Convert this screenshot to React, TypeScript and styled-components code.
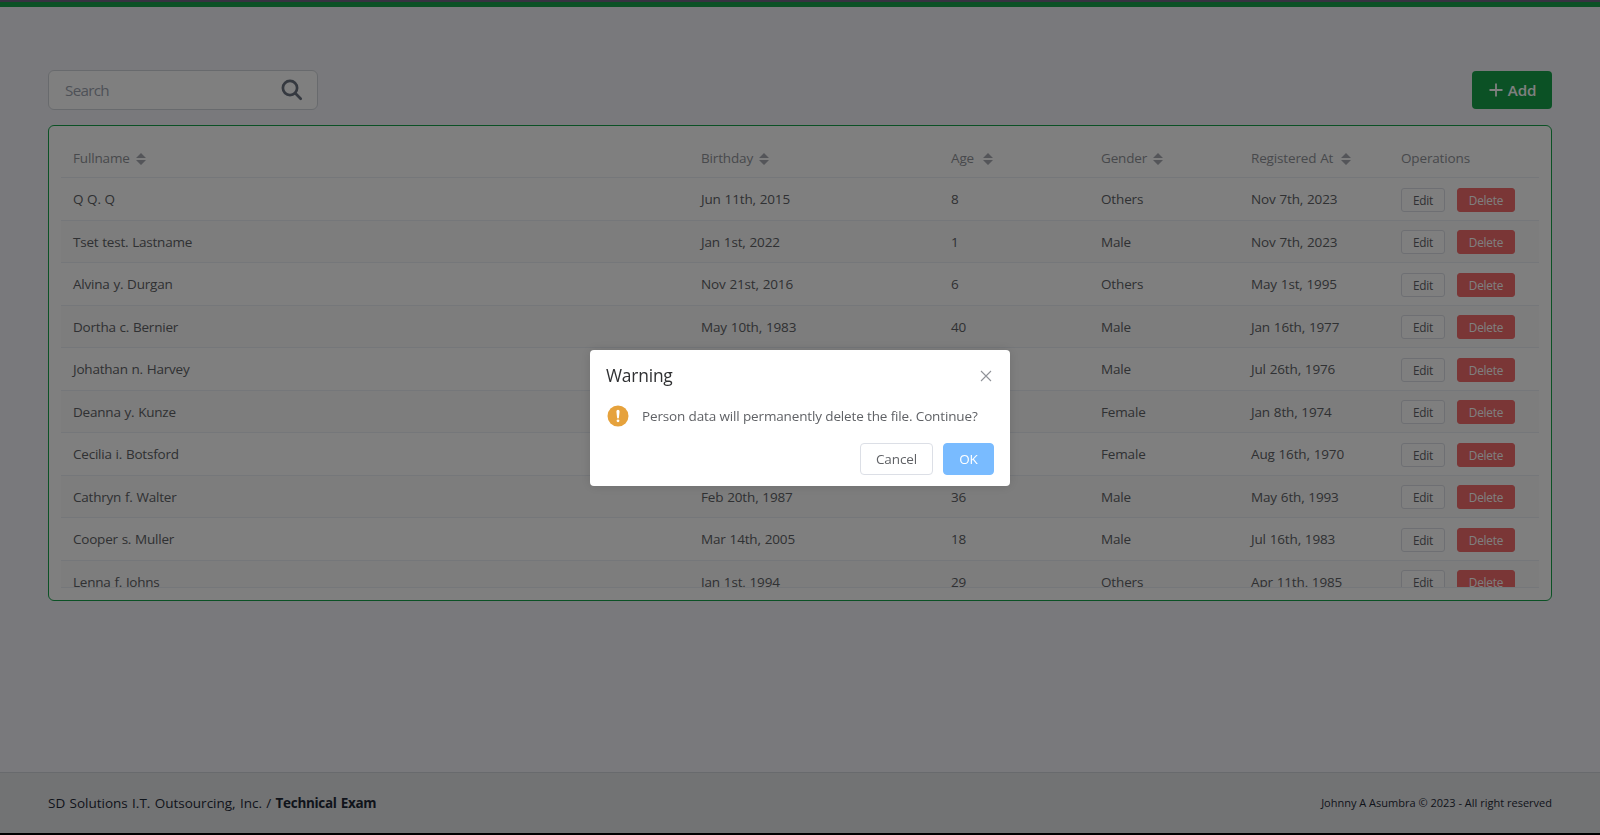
import React from "react";
import styled, { createGlobalStyle, css } from "styled-components";

const GlobalStyle = createGlobalStyle`
  *, *::before, *::after { box-sizing: border-box; }
  body {
    margin: 0;
    background: #000;
    font-family: "Open Sans", "Noto Sans", sans-serif;
    overflow: hidden;
  }
  button { font-family: inherit; cursor: pointer; }
`;

const Page = styled.div`
  display: flex;
  flex-direction: column;
  height: 833px;
  background: #f3f3f8;
  border-top: 2px solid #6e6683;
`;

const Accent = styled.div`
  flex: none;
  height: 5px;
  background: #16a34a;
`;

const Main = styled.main`
  flex: 1;
  padding: 63px 48px 0;
`;

const Toolbar = styled.div`
  display: flex;
  align-items: center;
  justify-content: space-between;
  height: 40px;
  margin-bottom: 15px;
`;

const SearchBox = styled.label`
  display: flex;
  align-items: center;
  width: 270px;
  height: 40px;
  padding: 0 14px 0 16px;
  border: 1px solid #d1d5db;
  border-radius: 6px;
  background: #fff;
`;

const SearchInput = styled.input`
  flex: 1;
  min-width: 0;
  padding: 0;
  border: 0;
  outline: 0;
  background: transparent;
  font: 15.2px "Open Sans", sans-serif;
  letter-spacing: -0.7px;
  color: #4b5563;
  &::placeholder { color: #9ca3af; opacity: 1; }
`;

const AddButton = styled.button`
  display: flex;
  align-items: center;
  justify-content: center;
  gap: 4px;
  width: 80px;
  height: 38px;
  padding: 0;
  border: 0;
  border-radius: 4px;
  background: #16a34a;
  color: #fff;
  font-size: 15.2px;
  font-weight: 600;
  letter-spacing: -0.2px;
`;

const Card = styled.section`
  height: 476px;
  padding: 12px;
  border: 1px solid #16a34a;
  border-radius: 6px;
  background: #fff;
`;

const Table = styled.div`
  height: 450px;
  overflow: hidden;
  border-bottom: 1px solid #ebeef5;
  font-size: 13.5px;
  letter-spacing: -0.15px;
  word-spacing: 0.5px;
  line-height: 23px;
  color: #606266;
`;

const columns = css`
  display: grid;
  grid-template-columns: 1fr 250px repeat(4, 150px);
`;

const HeadRow = styled.div`
  ${columns}
  height: 40px;
  border-bottom: 1px solid #ebeef5;
  color: #909399;
`;

const Row = styled.div<{ $striped: boolean }>`
  ${columns}
  height: 42.5px;
  border-bottom: 1px solid #ebeef5;
  background: ${(p) => (p.$striped ? "#fafafa" : "#fff")};
`;

const HeadCell = styled.div`
  display: flex;
  align-items: center;
  padding: 2px 12px 0;
  white-space: nowrap;
`;

const HeadLabel = styled.span<{ $width: number }>`
  width: ${(p) => p.$width}px;
`;

const Cell = styled.div`
  padding: 10px 12px 0;
  white-space: nowrap;
  &:first-child { letter-spacing: -0.21px; }
`;

const Actions = styled.div`
  display: flex;
  gap: 12px;
  padding: 9.75px 12px 0;
`;

const Sorter = styled.svg`
  margin: 1px 0 0 7px;
`;

const SmallButton = styled.button<{ $danger?: boolean }>`
  width: ${(p) => (p.$danger ? 58 : 44)}px;
  height: 24px;
  padding: 0;
  border: 1px solid ${(p) => (p.$danger ? "#f56c6c" : "#dcdfe6")};
  border-radius: 3px;
  background: ${(p) => (p.$danger ? "#f56c6c" : "#fff")};
  color: ${(p) => (p.$danger ? "#fff" : "#606266")};
  font-size: 11.8px;
  letter-spacing: -0.2px;
  word-spacing: 0;
  line-height: 22px;
`;

const Footer = styled.footer`
  display: flex;
  flex: none;
  align-items: center;
  justify-content: space-between;
  height: 61px;
  padding: 0 48px;
  border-top: 1px solid #d1d5db;
  background: #e5e7e9;
  color: #1f2937;
`;

const Company = styled.div`
  padding-bottom: 1px;
  font-size: 13.5px;
  word-spacing: 0.8px;
  strong {
    font-weight: 700;
    letter-spacing: -0.3px;
  }
`;

const Copyright = styled.div`
  padding-bottom: 1px;
  font-size: 11px;
`;

const Overlay = styled.div`
  position: fixed;
  inset: 0;
  display: flex;
  align-items: center;
  justify-content: center;
  background: rgba(0, 0, 0, 0.5);
`;

const Dialog = styled.div`
  width: 420px;
  height: 136px;
  padding: 15px 16px 0;
  border-radius: 4px;
  background: #fff;
  box-shadow: 0 0 12px rgba(0, 0, 0, 0.12);
`;

const DialogHead = styled.div`
  display: flex;
  align-items: center;
  justify-content: space-between;
  height: 22px;
`;

const DialogTitle = styled.div`
  padding-bottom: 1px;
  font-size: 17.4px;
  letter-spacing: -0.2px;
  color: #303133;
`;

const CloseButton = styled.button`
  display: flex;
  padding: 0;
  border: 0;
  background: transparent;
  color: #909399;
`;

const DialogBody = styled.div`
  display: flex;
  align-items: center;
  gap: 12px;
  height: 24px;
  margin-top: 17px;
  font-size: 13.5px;
  letter-spacing: -0.14px;
  color: #606266;
  white-space: nowrap;
`;

const DialogActions = styled.div`
  display: flex;
  justify-content: flex-end;
  gap: 10px;
  margin-top: 15px;
`;

const DialogButton = styled.button<{ $primary?: boolean }>`
  width: ${(p) => (p.$primary ? 51 : 73)}px;
  height: 32px;
  padding: 0;
  border: 1px solid ${(p) => (p.$primary ? "#79bbff" : "#dcdfe6")};
  border-radius: 4px;
  background: ${(p) => (p.$primary ? "#79bbff" : "#fff")};
  color: ${(p) => (p.$primary ? "#fff" : "#606266")};
  font-size: 13.5px;
  font-weight: ${(p) => (p.$primary ? 500 : 400)};
  letter-spacing: -0.1px;
`;

const SortIcon = () => (
  <Sorter width="10" height="12" viewBox="0 0 10 12" fill="#a8abb2">
    <path d="M0 5 5 0l5 5zM0 7h10l-5 5z" />
  </Sorter>
);

const headings = [
  { label: "Fullname", width: 56 },
  { label: "Birthday", width: 51 },
  { label: "Age", width: 25 },
  { label: "Gender", width: 45 },
  { label: "Registered At", width: 83 },
];

const people = [
  ["Q Q. Q", "Jun 11th, 2015", "8", "Others", "Nov 7th, 2023"],
  ["Tset test. Lastname", "Jan 1st, 2022", "1", "Male", "Nov 7th, 2023"],
  ["Alvina y. Durgan", "Nov 21st, 2016", "6", "Others", "May 1st, 1995"],
  ["Dortha c. Bernier", "May 10th, 1983", "40", "Male", "Jan 16th, 1977"],
  ["Johathan n. Harvey", "", "", "Male", "Jul 26th, 1976"],
  ["Deanna y. Kunze", "", "", "Female", "Jan 8th, 1974"],
  ["Cecilia i. Botsford", "", "", "Female", "Aug 16th, 1970"],
  ["Cathryn f. Walter", "Feb 20th, 1987", "36", "Male", "May 6th, 1993"],
  ["Cooper s. Muller", "Mar 14th, 2005", "18", "Male", "Jul 16th, 1983"],
  ["Lenna f. Johns", "Jan 1st, 1994", "29", "Others", "Apr 11th, 1985"],
];

export default function App() {
  return (
    <>
      <GlobalStyle />
      <Page>
        <Accent />
        <Main>
          <Toolbar>
            <SearchBox>
              <SearchInput placeholder="Search" />
              <svg width="22" height="22" viewBox="0 0 22 22" fill="none" stroke="#6b7280" strokeWidth="2.7" strokeLinecap="round">
                <circle cx="9" cy="9" r="7.1" />
                <path d="m14.3 14.3 5.4 5.4" />
              </svg>
            </SearchBox>
            <AddButton>
              <svg width="16" height="16" viewBox="0 0 16 16" fill="none" stroke="currentColor" strokeWidth="1.8">
                <path d="M8 1.5v13M1.5 8h13" />
              </svg>
              Add
            </AddButton>
          </Toolbar>
          <Card>
            <Table>
              <HeadRow>
                {headings.map((h) => (
                  <HeadCell key={h.label}>
                    <HeadLabel $width={h.width}>{h.label}</HeadLabel>
                    <SortIcon />
                  </HeadCell>
                ))}
                <HeadCell>Operations</HeadCell>
              </HeadRow>
              {people.map((person, i) => (
                <Row key={person[0]} $striped={i % 2 === 1}>
                  {person.map((value, c) => (
                    <Cell key={c}>{value}</Cell>
                  ))}
                  <Actions>
                    <SmallButton>Edit</SmallButton>
                    <SmallButton $danger>Delete</SmallButton>
                  </Actions>
                </Row>
              ))}
            </Table>
          </Card>
        </Main>
        <Footer>
          <Company>
            SD Solutions I.T. Outsourcing, Inc. / <strong>Technical Exam</strong>
          </Company>
          <Copyright>Johnny A Asumbra © 2023 - All right reserved</Copyright>
        </Footer>
      </Page>
      <Overlay>
        <Dialog role="dialog" aria-label="Warning">
          <DialogHead>
            <DialogTitle>Warning</DialogTitle>
            <CloseButton aria-label="Close">
              <svg width="16" height="16" viewBox="0 0 16 16" fill="none" stroke="currentColor" strokeWidth="1.1">
                <path d="m3 3 10 10M13 3 3 13" />
              </svg>
            </CloseButton>
          </DialogHead>
          <DialogBody>
            <svg width="24" height="24" viewBox="0 0 24 24">
              <circle cx="12" cy="12" r="10.5" fill="#e6a23c" />
              <path d="M10.4 7.4a1.6 1.6 0 0 1 3.2 0l-.65 6.1a.95.95 0 0 1-1.9 0z" fill="#fff" />
              <circle cx="12" cy="16.8" r="1.4" fill="#fff" />
            </svg>
            Person data will permanently delete the file. Continue?
          </DialogBody>
          <DialogActions>
            <DialogButton>Cancel</DialogButton>
            <DialogButton $primary>OK</DialogButton>
          </DialogActions>
        </Dialog>
      </Overlay>
    </>
  );
}
